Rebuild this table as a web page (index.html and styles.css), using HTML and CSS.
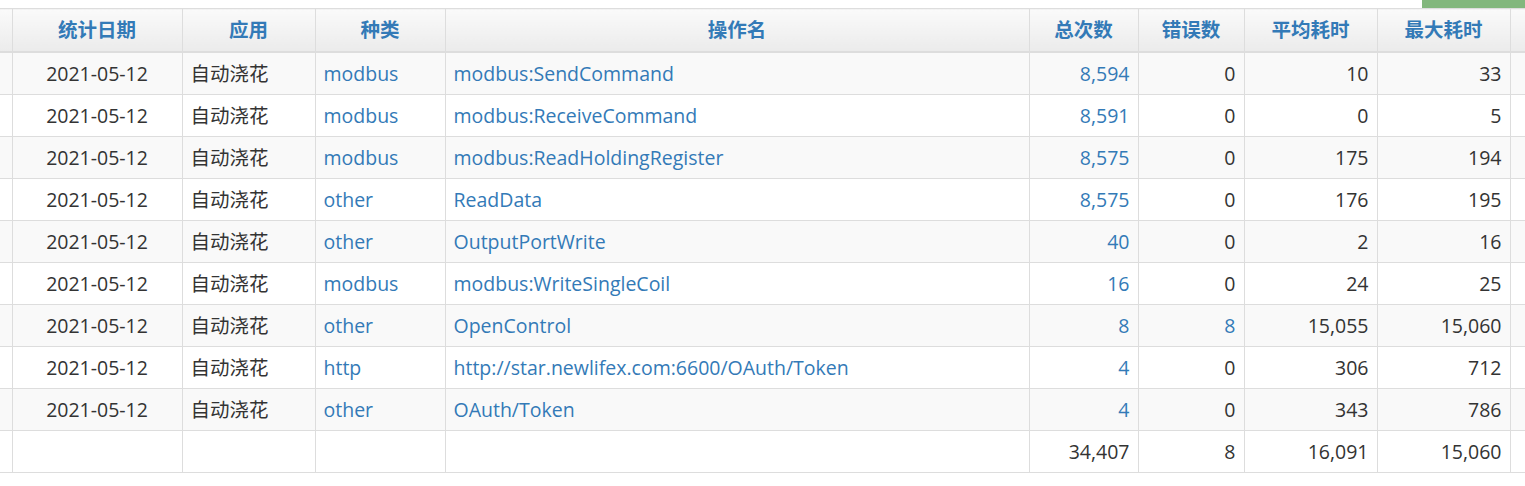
FILE: index.html
```html
<!DOCTYPE html>
<html lang="zh-CN">
<head>
<meta charset="utf-8">
<title>统计</title>
<link rel="stylesheet" href="styles.css">
</head>
<body>
<div class="topbar"><div class="green-tab"></div></div>
<div class="table-wrap">
<table class="data-table">
<colgroup>
<col class="c0"><col class="c1"><col class="c2"><col class="c3"><col class="c4"><col class="c5"><col class="c6"><col class="c7"><col class="c8"><col class="c9">
</colgroup>
<thead>
<tr><th></th><th>统计日期</th><th>应用</th><th>种类</th><th>操作名</th><th>总次数</th><th>错误数</th><th>平均耗时</th><th>最大耗时</th><th></th></tr>
</thead>
<tbody>
<tr><td></td><td class="ctr">2021-05-12</td><td>自动浇花</td><td class="lnk">modbus</td><td class="lnk">modbus:SendCommand</td><td class="num lnk">8,594</td><td class="num">0</td><td class="num">10</td><td class="num">33</td><td></td></tr>
<tr><td></td><td class="ctr">2021-05-12</td><td>自动浇花</td><td class="lnk">modbus</td><td class="lnk">modbus:ReceiveCommand</td><td class="num lnk">8,591</td><td class="num">0</td><td class="num">0</td><td class="num">5</td><td></td></tr>
<tr><td></td><td class="ctr">2021-05-12</td><td>自动浇花</td><td class="lnk">modbus</td><td class="lnk">modbus:ReadHoldingRegister</td><td class="num lnk">8,575</td><td class="num">0</td><td class="num">175</td><td class="num">194</td><td></td></tr>
<tr><td></td><td class="ctr">2021-05-12</td><td>自动浇花</td><td class="lnk">other</td><td class="lnk">ReadData</td><td class="num lnk">8,575</td><td class="num">0</td><td class="num">176</td><td class="num">195</td><td></td></tr>
<tr><td></td><td class="ctr">2021-05-12</td><td>自动浇花</td><td class="lnk">other</td><td class="lnk">OutputPortWrite</td><td class="num lnk">40</td><td class="num">0</td><td class="num">2</td><td class="num">16</td><td></td></tr>
<tr><td></td><td class="ctr">2021-05-12</td><td>自动浇花</td><td class="lnk">modbus</td><td class="lnk">modbus:WriteSingleCoil</td><td class="num lnk">16</td><td class="num">0</td><td class="num">24</td><td class="num">25</td><td></td></tr>
<tr><td></td><td class="ctr">2021-05-12</td><td>自动浇花</td><td class="lnk">other</td><td class="lnk">OpenControl</td><td class="num lnk">8</td><td class="num lnk">8</td><td class="num">15,055</td><td class="num">15,060</td><td></td></tr>
<tr><td></td><td class="ctr">2021-05-12</td><td>自动浇花</td><td class="lnk">http</td><td class="lnk">http://star.newlifex.com:6600/OAuth/Token</td><td class="num lnk">4</td><td class="num">0</td><td class="num">306</td><td class="num">712</td><td></td></tr>
<tr><td></td><td class="ctr">2021-05-12</td><td>自动浇花</td><td class="lnk">other</td><td class="lnk">OAuth/Token</td><td class="num lnk">4</td><td class="num">0</td><td class="num">343</td><td class="num">786</td><td></td></tr>
<tr class="total"><td></td><td></td><td></td><td></td><td></td><td class="num">34,407</td><td class="num">8</td><td class="num">16,091</td><td class="num">15,060</td><td></td></tr>
</tbody>
</table>
</div>
</body>
</html>
```

FILE: styles.css
```css
html, body {
  margin: 0;
  padding: 0;
  background: #fff;
  overflow: hidden;
}
body {
  font-family: "Open Sans", "Noto Sans CJK SC", sans-serif;
  font-size: 19.5px;
  color: #333;
}
.topbar {
  display: flex;
  justify-content: flex-end;
  height: 8px;
}
.green-tab {
  width: 103px;
  height: 8px;
  background: #82b77d;
}
.table-wrap {
  width: 1525px;
  overflow: hidden;
}
.data-table {
  border-collapse: collapse;
  table-layout: fixed;
  width: 1610px;
}
.c0 { width: 12px; }
.c1 { width: 170px; }
.c2 { width: 133px; }
.c3 { width: 130px; }
.c4 { width: 584px; }
.c5 { width: 109px; }
.c6 { width: 106px; }
.c7 { width: 133px; }
.c8 { width: 133px; }
.c9 { width: 100px; }
.data-table th,
.data-table td {
  border: 1px solid #ddd;
  padding: 8px;
  line-height: 24px;
  white-space: nowrap;
  overflow: hidden;
}
.data-table th:first-child,
.data-table td:first-child {
  border-left: none;
  padding: 0;
}
.data-table th {
  height: 26px;
  font-weight: bold;
  color: #337ab7;
  text-align: center;
  background: linear-gradient(#fafafa, #ebebeb);
  border-bottom: 2px solid #ddd;
}
.data-table td {
  height: 25px;
  text-align: left;
}
.data-table tbody tr:nth-child(odd) {
  background: #f9f9f9;
}
.data-table tbody tr.total {
  background: #fff;
}
.ctr { text-align: center !important; }
.num { text-align: right !important; }
.lnk { color: #337ab7; }
```
